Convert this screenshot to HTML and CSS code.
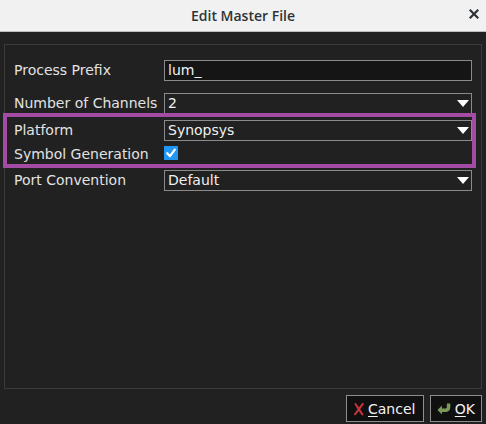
FILE: index.html
```html
<!DOCTYPE html>
<html lang="en">
<head>
    <meta charset="UTF-8">
    <meta name="viewport" content="width=device-width, initial-scale=1.0">
    <title>Edit Master File</title>
    <link rel="stylesheet" href="styles.css">
</head>
<body>
    <div class="window">
        <div class="titlebar">
            <span class="title">Edit Master File</span>
            <svg class="close" width="10" height="10" viewBox="0 0 10 10">
                <path d="M1.5 1.5 L8.5 8.5 M8.5 1.5 L1.5 8.5" stroke="#2e3436" stroke-width="2.2" stroke-linecap="square"/>
            </svg>
        </div>

        <div class="content">
            <div class="frame">
                <div class="row row-prefix">
                    <label class="label">Process Prefix</label>
                    <div class="field text-field">lum_</div>
                </div>
                <div class="row row-channels">
                    <label class="label">Number of Channels</label>
                    <div class="field combo"><span>2</span><span class="arrow"></span></div>
                </div>
                <div class="row row-platform">
                    <label class="label">Platform</label>
                    <div class="field combo"><span>Synopsys</span><span class="arrow"></span></div>
                </div>
                <div class="row row-symbol">
                    <label class="label">Symbol Generation</label>
                    <span class="checkbox">
                        <svg width="14" height="14" viewBox="0 0 14 14">
                            <path d="M3.2 7.2 L6 10.2 L10.8 3.6" fill="none" stroke="#fff" stroke-width="2.2" stroke-linecap="round" stroke-linejoin="round"/>
                        </svg>
                    </span>
                </div>
                <div class="row row-port">
                    <label class="label">Port Convention</label>
                    <div class="field combo"><span>Default</span><span class="arrow"></span></div>
                </div>
            </div>

            <div class="buttons">
                <button class="btn btn-cancel">
                    <svg width="12" height="14" viewBox="0 0 12 14">
                        <path d="M2.5 2 C4.5 5 7 9 9.5 12.5" fill="none" stroke="#c8353a" stroke-width="2" stroke-linecap="round"/>
                        <path d="M9.8 1.8 C7.5 5 5 8.5 2 12.3" fill="none" stroke="#c8353a" stroke-width="2" stroke-linecap="round"/>
                    </svg>
                    <span><u>C</u>ancel</span>
                </button>
                <button class="btn btn-ok">
                    <svg width="16" height="14" viewBox="0 0 16 14">
                        <path d="M6 3.5 L1.5 8 L6 12.5 L6 10 L10 10 C13 10 14.5 8 14.5 5 L14.5 1.5 L11 1.5 L11 5 C11 6 10.5 6.5 9.5 6.5 L6 6.5 Z" fill="#7a9a5a"/>
                    </svg>
                    <span><u>O</u>K</span>
                </button>
            </div>
        </div>

        <div class="highlight"></div>
    </div>
</body>
</html>
```

FILE: styles.css
```css
html, body {
    margin: 0;
    padding: 0;
}

body {
    font-family: 'DejaVu Sans', 'Noto Sans', sans-serif;
    background-color: #212121;
}

.window {
    position: relative;
    width: 486px;
    height: 424px;
    display: flex;
    flex-direction: column;
}

.titlebar {
    height: 31px;
    background-color: #f1f1f1;
    border-bottom: 1px solid #bdbdbd;
    display: flex;
    align-items: center;
    justify-content: center;
    position: relative;
}

.title {
    font-family: 'Open Sans', 'Noto Sans', sans-serif;
    font-weight: 600;
    font-size: 14px;
    color: #2e3436;
}

.close {
    position: absolute;
    right: 7px;
    top: 9px;
}

.content {
    flex: 1;
    display: flex;
    flex-direction: column;
    padding: 12px 4px 2px 4px;
    background-color: #212121;
}

.frame {
    height: 345px;
    box-sizing: border-box;
    border: 1px solid #3b3b3b;
    padding: 15px 9px 0 9px;
}

.row {
    display: flex;
    align-items: center;
}

.label {
    width: 150px;
    font-size: 14px;
    color: #e2e2e2;
    line-height: 21px;
    white-space: nowrap;
}

.field {
    flex: 1;
    height: 21px;
    box-sizing: border-box;
    border: 1px solid #8a8a8a;
    color: #f0f0f0;
    font-size: 14px;
    line-height: 19px;
    padding: 0 3px;
}

.text-field {
    background-color: #151515;
}

.combo {
    display: flex;
    justify-content: space-between;
    align-items: center;
    padding-right: 2px;
}

.arrow {
    width: 0;
    height: 0;
    border-left: 6px solid transparent;
    border-right: 6px solid transparent;
    border-top: 7px solid #ffffff;
    margin-top: -1px;
}

.row-channels {
    margin-top: 12px;
}

.row-platform {
    margin-top: 6px;
}

.row-symbol {
    margin-top: 3px;
    height: 21px;
}

.row-port {
    margin-top: 5px;
}

.checkbox {
    width: 14px;
    height: 14px;
    background-color: #2196f3;
    display: inline-flex;
    margin-top: -3px;
}

.buttons {
    display: flex;
    justify-content: flex-end;
    gap: 6px;
    margin-top: 6px;
    padding-right: 0;
}

.btn {
    height: 27px;
    box-sizing: border-box;
    border: 1px solid #8e8e8e;
    background-color: #101010;
    color: #f2f2f2;
    font-family: 'DejaVu Sans', sans-serif;
    font-size: 14px;
    display: flex;
    align-items: center;
    gap: 3px;
    padding: 0 6px;
}

.btn u {
    text-decoration-thickness: 1px;
    text-underline-offset: 2px;
}

.btn-cancel {
    width: 78px;
}

.btn-ok {
    width: 52px;
    padding-left: 5px;
}

.highlight {
    position: absolute;
    left: 3px;
    top: 113px;
    width: 473px;
    height: 55px;
    box-sizing: border-box;
    border: 4px solid #a34ca3;
}
```
